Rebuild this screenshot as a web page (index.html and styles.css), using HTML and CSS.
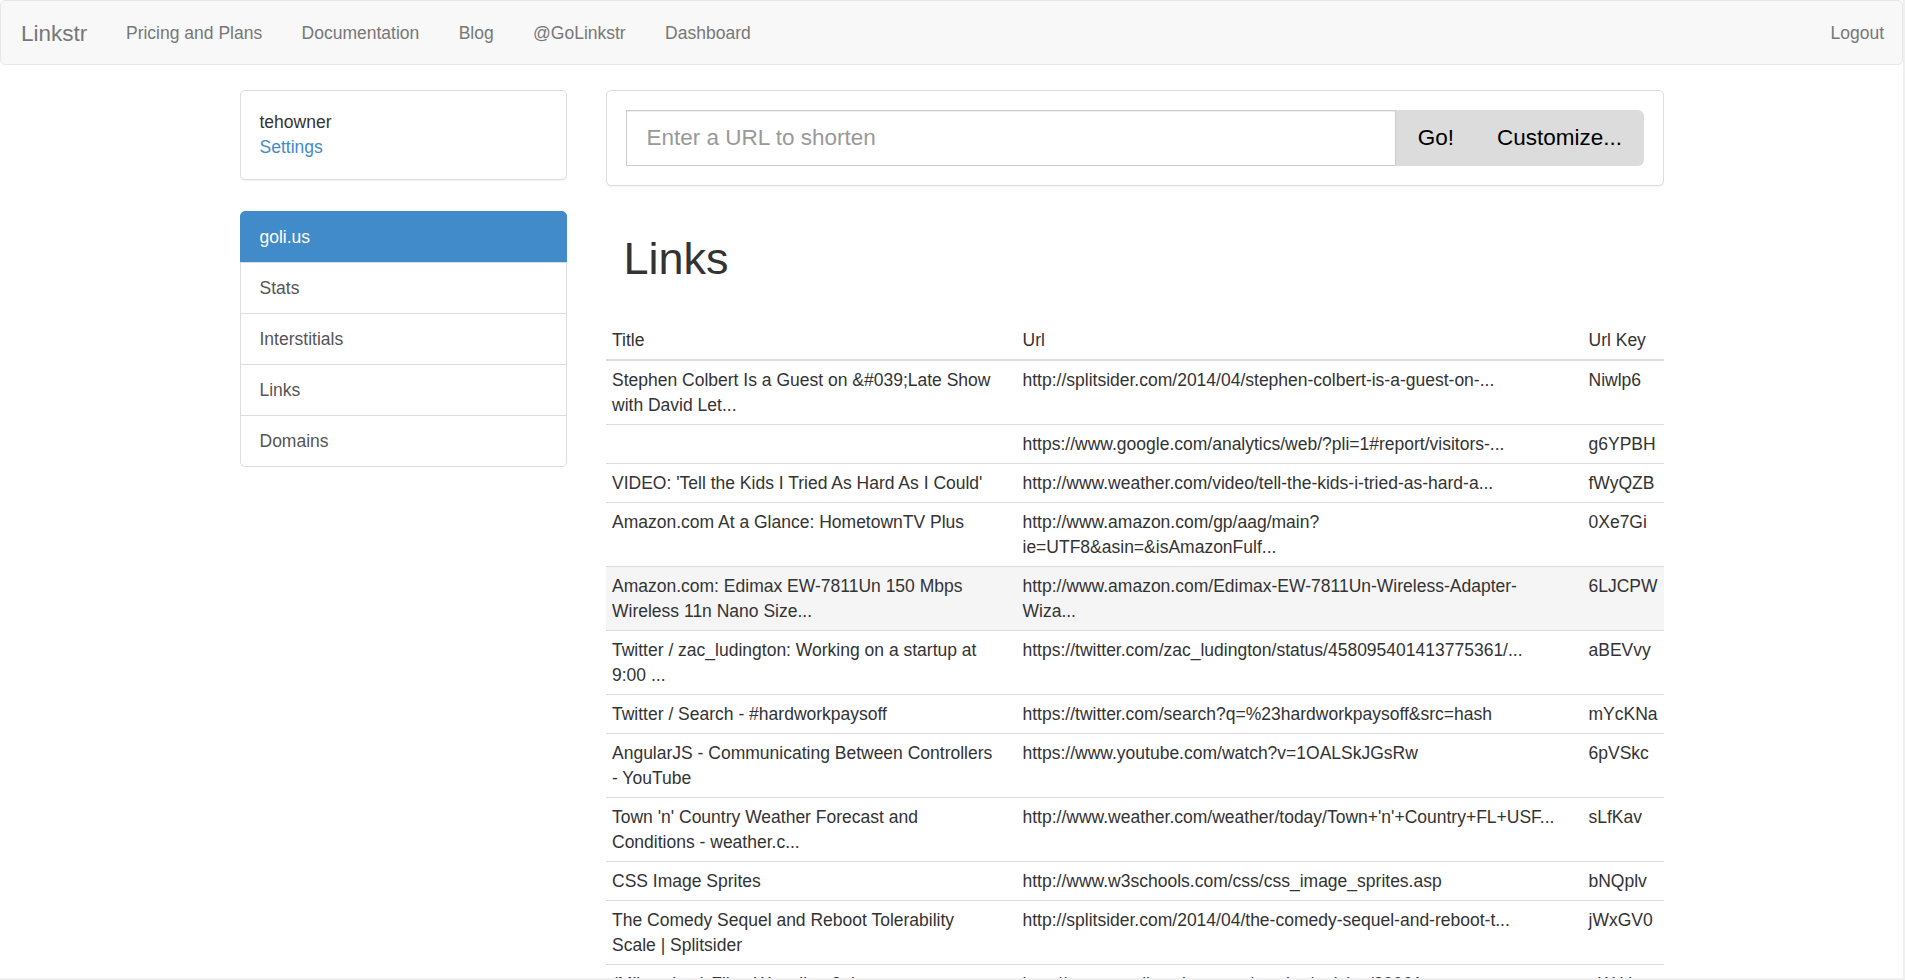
FILE: index.html
```html
<!DOCTYPE html>
<html lang="en">
<head>
<meta charset="utf-8">
<title>Linkstr - Links</title>
<link rel="stylesheet" href="styles.css">
</head>
<body>
<nav class="navbar">
  <a class="brand" href="#">Linkstr</a>
  <ul class="nav-links">
    <li><a href="#">Pricing and Plans</a></li>
    <li><a href="#">Documentation</a></li>
    <li><a href="#">Blog</a></li>
    <li><a href="#">@GoLinkstr</a></li>
    <li><a href="#">Dashboard</a></li>
  </ul>
  <ul class="nav-links nav-right">
    <li><a href="#">Logout</a></li>
  </ul>
</nav>

<div class="layout">
  <aside class="sidebar">
    <div class="panel user-panel">
      <div class="user-name">tehowner</div>
      <a class="settings-link" href="#">Settings</a>
    </div>
    <div class="list-group">
      <a class="list-item active" href="#">goli.us</a>
      <a class="list-item" href="#">Stats</a>
      <a class="list-item" href="#">Interstitials</a>
      <a class="list-item" href="#">Links</a>
      <a class="list-item" href="#">Domains</a>
    </div>
  </aside>

  <main class="content">
    <div class="panel url-panel">
      <form class="url-form">
        <input class="url-input" type="text" placeholder="Enter a URL to shorten">
        <div class="btn-group">
          <button class="btn" type="button">Go!</button>
          <button class="btn" type="button">Customize...</button>
        </div>
      </form>
    </div>

    <h1 class="page-title">Links</h1>

    <table class="links-table">
      <colgroup>
        <col class="col-title">
        <col class="col-url">
        <col class="col-key">
      </colgroup>
      <thead>
        <tr><th>Title</th><th>Url</th><th>Url Key</th></tr>
      </thead>
      <tbody>
        <tr><td class="t">Stephen Colbert Is a Guest on &amp;#039;Late Show with David Let...</td><td class="u">http://splitsider.com/2014/04/stephen-colbert-is-a-guest-on-...</td><td>Niwlp6</td></tr>
        <tr><td class="t"></td><td class="u">https://www.google.com/analytics/web/?pli=1#report/visitors-...</td><td>g6YPBH</td></tr>
        <tr><td class="t">VIDEO: 'Tell the Kids I Tried As Hard As I Could'</td><td class="u">http://www.weather.com/video/tell-the-kids-i-tried-as-hard-a...</td><td>fWyQZB</td></tr>
        <tr><td class="t">Amazon.com At a Glance: HometownTV Plus</td><td class="u">http://www.amazon.com/gp/aag/main?ie=UTF8&amp;asin=&amp;isAmazonFulf...</td><td>0Xe7Gi</td></tr>
        <tr class="hover"><td class="t">Amazon.com: Edimax EW-7811Un 150 Mbps Wireless 11n Nano Size...</td><td class="u">http://www.amazon.com/Edimax-EW-7811Un-Wireless-Adapter-Wiza...</td><td>6LJCPW</td></tr>
        <tr><td class="t">Twitter / zac_ludington: Working on a startup at 9:00 ...</td><td class="u">https://twitter.com/zac_ludington/status/458095401413775361/...</td><td>aBEVvy</td></tr>
        <tr><td class="t">Twitter / Search - #hardworkpaysoff</td><td class="u">https://twitter.com/search?q=%23hardworkpaysoff&amp;src=hash</td><td>mYcKNa</td></tr>
        <tr><td class="t">AngularJS - Communicating Between Controllers - YouTube</td><td class="u">https://www.youtube.com/watch?v=1OALSkJGsRw</td><td>6pVSkc</td></tr>
        <tr><td class="t">Town 'n' Country Weather Forecast and Conditions - weather.c...</td><td class="u">http://www.weather.com/weather/today/Town+'n'+Country+FL+USF...</td><td>sLfKav</td></tr>
        <tr><td class="t">CSS Image Sprites</td><td class="u">http://www.w3schools.com/css/css_image_sprites.asp</td><td>bNQplv</td></tr>
        <tr><td class="t">The Comedy Sequel and Reboot Tolerability Scale | Splitsider</td><td class="u">http://splitsider.com/2014/04/the-comedy-sequel-and-reboot-t...</td><td>jWxGV0</td></tr>
        <tr><td class="t">(Milwaukee) Film: Wrestling 3 thr...</td><td class="u">http://www.onmilwaukee.com/movies/articles/20061...</td><td>nWtkbr</td></tr>
      </tbody>
    </table>
  </main>
</div>
</body>
</html>
```
FILE: styles.css
```css
* {
  box-sizing: border-box;
}

html {
  overflow: hidden;
}

body {
  margin: 0 2px 0 0;
  font-family: "Liberation Sans", Arial, Helvetica, sans-serif;
  font-size: 17.5px;
  line-height: 25px;
  color: #333;
  background: #fff;
}

body::after {
  content: "";
  position: fixed;
  left: 0;
  top: 0;
  right: 0;
  bottom: 0;
  border-right: 2px solid #f0f0f0;
  border-bottom: 2px solid #f0f0f0;
  pointer-events: none;
}

a {
  text-decoration: none;
}

/* ---------- navbar ---------- */
.navbar {
  display: flex;
  align-items: center;
  height: 65px;
  background: #f8f8f8;
  border: 1px solid #e7e7e7;
  border-radius: 5px;
  margin-bottom: 25px;
  padding-top: 1px;
}

.brand {
  padding: 0 19px 0 20px;
  font-size: 22.5px;
  line-height: 25px;
  color: #777;
}

.nav-links {
  display: flex;
  list-style: none;
  margin: 0;
  padding: 0;
}

.nav-links a {
  display: block;
  padding: 0 19.7px;
  color: #777;
  line-height: 25px;
}

.nav-right {
  margin-left: auto;
}

.nav-right a {
  padding-right: 18px;
}

/* ---------- layout ---------- */
.layout {
  display: grid;
  grid-template-columns: 327px 1058px;
  column-gap: 39px;
  width: 1424px;
  margin: 0 auto;
  align-items: start;
}

.panel {
  border: 1px solid #ddd;
  border-radius: 5px;
  background: #fff;
  box-shadow: 0 1px 1px rgba(0, 0, 0, 0.05);
}

/* ---------- sidebar ---------- */
.user-panel {
  padding: 18.75px 19px;
}

.settings-link {
  color: #428bca;
}

.list-group {
  display: flex;
  flex-direction: column;
  margin-top: 31.5px;
}

.list-item {
  display: block;
  padding: 12.5px 19px;
  border: 1px solid #ddd;
  margin-bottom: -1px;
  color: #555;
  background: #fff;
}

.list-item:first-child {
  border-radius: 5px 5px 0 0;
}

.list-item:last-child {
  border-radius: 0 0 5px 5px;
  margin-bottom: 0;
}

.list-item.active {
  background: #428bca;
  border-color: #428bca;
  color: #fff;
}

/* ---------- url form ---------- */
.url-panel {
  padding: 18.75px 19px;
}

.url-form {
  display: flex;
  height: 56px;
}

.url-input {
  flex: 1;
  min-width: 0;
  height: 56px;
  border: 1px solid #ccc;
  border-radius: 0;
  padding: 0 20px;
  font-family: inherit;
  font-size: 22.5px;
  color: #555;
  box-shadow: inset 0 1px 1px rgba(0, 0, 0, 0.075);
  outline: none;
}

.url-input::placeholder {
  color: #999;
}

.btn-group {
  display: flex;
  background: #dcdcdc;
  border-radius: 0 6px 6px 0;
}

.btn {
  border: 0;
  background: transparent;
  padding: 0 21.5px;
  font-family: inherit;
  font-size: 22.5px;
  color: #000;
}

/* ---------- heading ---------- */
.page-title {
  font-size: 45px;
  font-weight: 500;
  line-height: 49.5px;
  margin: 48.5px 0 37.5px 18px;
  color: #333;
}

/* ---------- table ---------- */
.links-table {
  width: 100%;
  border-collapse: separate;
  border-spacing: 0;
  table-layout: fixed;
}

.col-title {
  width: 410.5px;
}

.col-url {
  width: 566px;
}

.links-table th,
.links-table td {
  padding: 6.5px;
  text-align: left;
  vertical-align: top;
  line-height: 25px;
}

.links-table th {
  font-weight: normal;
  vertical-align: bottom;
  border-bottom: 2px solid #ddd;
}

.links-table td {
  border-top: 1px solid #ddd;
}

.links-table tbody tr:first-child td {
  border-top: 0;
}

.links-table td.t {
  padding-right: 18px;
}

.links-table td.u {
  padding-right: 13.5px;
}

.links-table tr.hover td {
  background: #f5f5f5;
}
```
